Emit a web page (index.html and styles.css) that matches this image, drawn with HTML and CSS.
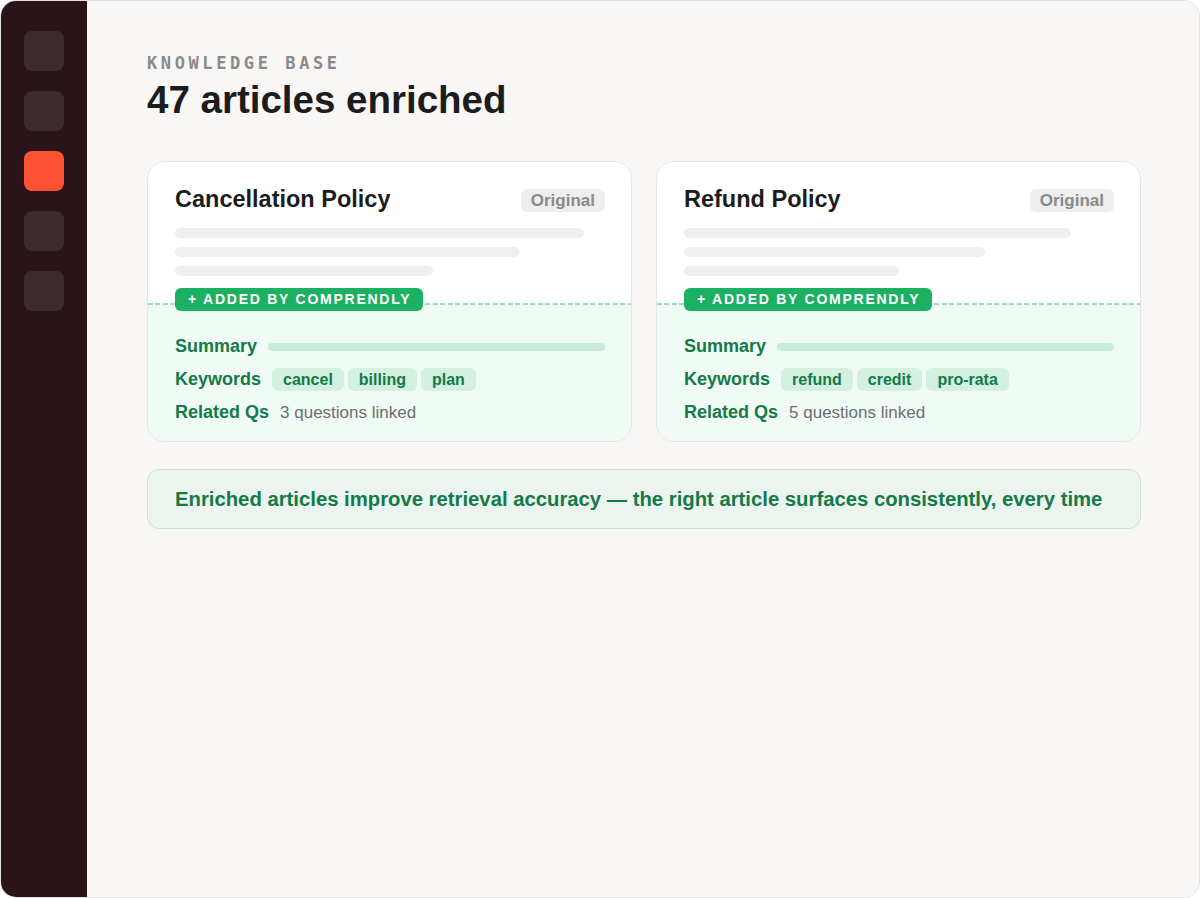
FILE: index.html
```html
<!DOCTYPE html>
<html lang="en">
<head>
    <meta charset="UTF-8">
    <meta name="viewport" content="width=device-width, initial-scale=1.0">
    <title>Knowledge Base</title>
    <link rel="stylesheet" href="styles.css">
</head>
<body>
    <div class="app">
        <!-- Sidebar -->
        <nav class="sidebar">
            <span class="nav-item"></span>
            <span class="nav-item"></span>
            <span class="nav-item active"></span>
            <span class="nav-item"></span>
            <span class="nav-item"></span>
        </nav>

        <main class="main">
            <p class="eyebrow">KNOWLEDGE BASE</p>
            <h1 class="page-title">47 articles enriched</h1>

            <section class="cards">
                <article class="card">
                    <div class="card-top">
                        <div class="card-head">
                            <h2>Cancellation Policy</h2>
                            <span class="tag-original">Original</span>
                        </div>
                        <div class="skeleton">
                            <span style="width: 95%"></span>
                            <span style="width: 80%"></span>
                            <span style="width: 60%"></span>
                        </div>
                        <span class="added-badge">+ ADDED BY COMPRENDLY</span>
                    </div>
                    <div class="card-extra">
                        <div class="row">
                            <span class="label">Summary</span>
                            <span class="summary-bar"></span>
                        </div>
                        <div class="row">
                            <span class="label">Keywords</span>
                            <span class="chip">cancel</span>
                            <span class="chip">billing</span>
                            <span class="chip">plan</span>
                        </div>
                        <div class="row">
                            <span class="label">Related Qs</span>
                            <span class="muted">3 questions linked</span>
                        </div>
                    </div>
                </article>

                <article class="card">
                    <div class="card-top">
                        <div class="card-head">
                            <h2>Refund Policy</h2>
                            <span class="tag-original">Original</span>
                        </div>
                        <div class="skeleton">
                            <span style="width: 90%"></span>
                            <span style="width: 70%"></span>
                            <span style="width: 50%"></span>
                        </div>
                        <span class="added-badge">+ ADDED BY COMPRENDLY</span>
                    </div>
                    <div class="card-extra">
                        <div class="row">
                            <span class="label">Summary</span>
                            <span class="summary-bar"></span>
                        </div>
                        <div class="row">
                            <span class="label">Keywords</span>
                            <span class="chip">refund</span>
                            <span class="chip">credit</span>
                            <span class="chip">pro-rata</span>
                        </div>
                        <div class="row">
                            <span class="label">Related Qs</span>
                            <span class="muted">5 questions linked</span>
                        </div>
                    </div>
                </article>
            </section>

            <div class="banner">
                Enriched articles improve retrieval accuracy — the right article surfaces consistently, every time
            </div>
        </main>
    </div>
</body>
</html>
```

FILE: styles.css
```css
/* Reset */
* {
    box-sizing: border-box;
}

body, h1, h2, p {
    margin: 0;
    padding: 0;
}

body {
    background: #ffffff;
    font-family: 'Liberation Sans', Arial, sans-serif;
    color: #1c1c1c;
}

/* Window frame */
.app {
    display: flex;
    width: 1200px;
    height: 898px;
    border: 1px solid #e2e2e2;
    border-radius: 16px;
    overflow: hidden;
}

/* Sidebar */
.sidebar {
    width: 86px;
    flex-shrink: 0;
    background: #2a1417;
    display: flex;
    flex-direction: column;
    align-items: center;
    gap: 20px;
    padding-top: 30px;
}

.nav-item {
    display: block;
    width: 40px;
    height: 40px;
    border-radius: 8px;
    background: #3d2b2e;
}

.nav-item.active {
    background: #ff5133;
}

/* Main area */
.main {
    flex: 1;
    background: #f8f7f5;
    padding: 50px 58px 0 60px;
}

.eyebrow {
    font-family: 'DejaVu Sans Mono', monospace;
    font-weight: bold;
    font-size: 17px;
    line-height: 24px;
    letter-spacing: 3.6px;
    color: #8a8a8a;
    margin-bottom: 2px;
}

.page-title {
    font-size: 38.5px;
    line-height: 46px;
    font-weight: bold;
    color: #1c1c1c;
}

/* Cards */
.cards {
    display: grid;
    grid-template-columns: 1fr 1fr;
    gap: 24px;
    margin-top: 38px;
}

.card {
    background: #ffffff;
    border: 1px solid #e5e5e5;
    border-radius: 18px;
    overflow: hidden;
}

.card-top {
    padding: 23px 26px 0 27px;
}

.card-head {
    display: flex;
    justify-content: space-between;
    align-items: center;
}

.card-head h2 {
    font-size: 23.5px;
    line-height: 28px;
    font-weight: bold;
}

.tag-original {
    background: #eeeeee;
    color: #8a8a8a;
    font-weight: bold;
    font-size: 17px;
    line-height: 23px;
    padding: 0 10px;
    border-radius: 6px;
    margin-top: 2px;
}

.skeleton {
    display: flex;
    flex-direction: column;
    gap: 9px;
    margin-top: 15px;
}

.skeleton span {
    display: block;
    height: 10px;
    border-radius: 5px;
    background: #efefef;
}

/* Badge sits across the dashed divider */
.added-badge {
    position: relative;
    z-index: 1;
    display: block;
    width: max-content;
    margin-top: 12px;
    margin-bottom: -8px;
    background: #1bb062;
    color: #ffffff;
    font-weight: bold;
    font-size: 14px;
    line-height: 23px;
    letter-spacing: 1.75px;
    padding: 0 12px 0 13px;
    border-radius: 6px;
}

/* Enriched part of the card */
.card-extra {
    background:
        repeating-linear-gradient(90deg, #9fdcbb 0 5px, transparent 5px 7.5px) top / 100% 2px no-repeat,
        #f1fbf5;
    padding: 32px 26px 17px 27px;
    display: flex;
    flex-direction: column;
    gap: 10px;
}

.row {
    display: flex;
    align-items: center;
    height: 23px;
}

.label {
    font-weight: bold;
    font-size: 18px;
    color: #137a48;
    margin-right: 11px;
    white-space: nowrap;
}

.summary-bar {
    flex: 1;
    height: 8px;
    border-radius: 4px;
    background: #c8ecd8;
}

.chip {
    background: #d3f0e0;
    color: #137a48;
    font-weight: bold;
    font-size: 16px;
    line-height: 23px;
    padding: 0 11px;
    border-radius: 6px;
    margin-right: 4px;
}

.muted {
    font-size: 17px;
    color: #6e6e6e;
}

/* Bottom note */
.banner {
    margin-top: 27px;
    height: 60px;
    display: flex;
    align-items: center;
    padding: 0 27px;
    background: #ebf4ee;
    border: 1px solid #c8e5d3;
    border-radius: 12px;
    color: #137a48;
    font-weight: bold;
    font-size: 20.3px;
}
```
